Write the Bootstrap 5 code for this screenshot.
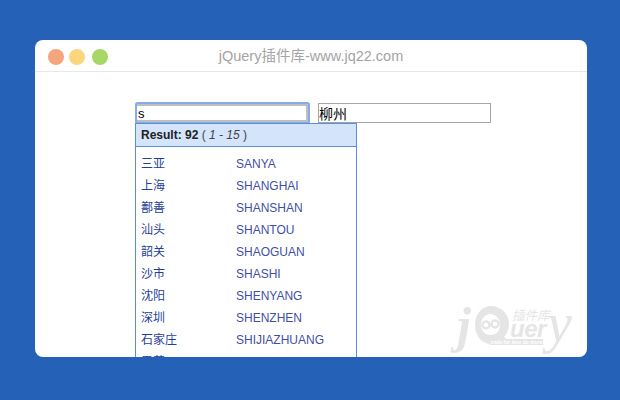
<!DOCTYPE html>
<html lang="zh">
<head>
  <meta charset="UTF-8" />
  <title>jQuery插件库</title>
  <link href="https://cdn.jsdelivr.net/npm/bootstrap@5.3.0/dist/css/bootstrap.min.css" rel="stylesheet" />
  <style>
    html, body { height: 400px; overflow: hidden; }
    body { background: #2562b7; padding: 40px 33px 43px 35px; font-family: "Liberation Sans", "Noto Sans CJK SC", sans-serif; }
    .demo-window { height: 317px; background: #fff; border-radius: 8px; overflow: hidden; position: relative; }
    .demo-bar { height: 32px; border-bottom: 1px solid #e8e8e8; padding: 2px 0 0 13px; position: relative; }
    .dot { width: 16px; height: 16px; border-radius: 50%; }
    .dot-red { background: #f5a57d; }
    .dot-yellow { background: #fad67c; margin-left: 1px; }
    .dot-green { background: #a8d767; margin-left: 3px; }
    .demo-title { position: absolute; left: 0; right: 0; top: 6px; text-align: center; color: #a4a4a4; font-size: 14.5px; line-height: 20px; }
    .demo-body { padding: 30px 0 0 100px; position: relative; }
    .ac-box { position: relative; width: 174px; }
    .ac-input { display: block; border-radius: 0; font-size: 13px; color: #000; background: #fff; font-family: inherit; outline: 0; }
    .ac-input-first { width: 171px; height: 18px; margin: 2px 0 1px 2px; border-style: solid; border-color: #bfbfbf; border-width: 2px 2px 2px 0; padding: 0 1px 0 1px; line-height: 14px; box-shadow: 0 0 0 2px #86abea; border-radius: 1px; }
    .ac-input-second { width: 173px; height: 20px; margin: 1px 0 0 9px; border: 1px solid #a6a6a6; padding: 0 0 1px; font-size: 14px; line-height: 17px; }
    .ac-menu { position: absolute; left: 0; top: 21px; width: 222px; border: 1px solid #5b8ed8; border-bottom: 0; background: #fff; }
    .ac-head { height: 23px; background: #d3e4fb; border-bottom: 1px solid #5b8ed8; padding-left: 5px; font-size: 12px; line-height: 23px; color: #444; }
    .ac-head b { color: #222; }
    .ac-list { padding: 6px 0 0 5px; margin: 0; }
    .ac-row { height: 22px; line-height: 22px; font-size: 12px; }
    .ac-cn { width: 95px; color: #1f3f99; }
    .ac-en { color: #3f4fa3; }
    /* watermark, offsets are from the window corner */
    .wm { position: absolute; left: 420px; top: 262px; width: 125px; height: 55px; color: #e5e5e5; pointer-events: none; }
    .wm-face { position: absolute; left: 19px; top: 3px; }
    .wm-j { position: absolute; left: 2px; top: -2px; font: italic bold 50px/50px "Liberation Serif", serif; }
    .wm-uer { position: absolute; left: 55px; top: 12px; font: italic bold 24px/30px "Liberation Sans", sans-serif; letter-spacing: -.5px; }
    .wm-y { position: absolute; left: 92px; top: -4px; font: italic 56px/50px "Liberation Serif", serif; }
    .wm-cn { position: absolute; left: 57px; top: 5px; font: italic 12.5px/16px "Noto Sans CJK SC", sans-serif; }
    .wm-sub { position: absolute; left: 35px; top: 37px; width: 53px; height: 6px; overflow: hidden; text-align: center; font: italic bold 5px/6px "Liberation Sans", sans-serif; white-space: nowrap; background: #e5e5e5; color: #fff; }
  </style>
</head>
<body>
  <div class="demo-window">
    <div class="demo-bar d-flex align-items-center gap-1">
      <span class="dot dot-red"></span>
      <span class="dot dot-yellow"></span>
      <span class="dot dot-green"></span>
      <div class="demo-title">jQuery插件库-www.jq22.com</div>
    </div>
    <div class="demo-body d-flex align-items-start">
      <div class="ac-box">
        <input class="ac-input ac-input-first" type="text" value="s" />
        <div class="ac-menu">
          <div class="ac-head"><b>Result: 92</b> ( <i>1 - 15</i> )</div>
          <div class="ac-list" id="acList"></div>
        </div>
      </div>
      <input class="ac-input ac-input-second" type="text" value="柳州" />
    </div>
    <div class="wm">
      <span class="wm-j">j</span>
      <svg class="wm-face" width="36" height="40" viewBox="0 0 36 40">
        <!-- thick ring, heavier at the bottom, with a small tail -->
        <path fill="#e5e5e5" fill-rule="evenodd" d="M17 1C8 1 1 9 1 20s7 19 16 19c3 0 6-1 8-2l6 1 2-4-3-2c3-3 5-8 5-13C35 9 27 1 17 1zM16 9c5 0 10 4 10 11 0 6-4 10-9 10-6 0-10-4-10-10C7 14 11 9 16 9z"/>
        <circle cx="12" cy="20" r="3.500" fill="none" stroke="#e5e5e5" stroke-width="2.500"/>
        <circle cx="21" cy="19" r="3.500" fill="none" stroke="#e5e5e5" stroke-width="2.500"/>
      </svg>
      <span class="wm-uer">uer</span>
      <span class="wm-y">y</span>
      <span class="wm-cn">插件库</span>
      <span class="wm-sub">code for less do more</span>
    </div>
  </div>

  <script src="https://cdn.jsdelivr.net/npm/bootstrap@5.3.0/dist/js/bootstrap.bundle.min.js"></script>
  <script>
    const cities = [
      ['三亚', 'SANYA'], ['上海', 'SHANGHAI'], ['鄯善', 'SHANSHAN'], ['汕头', 'SHANTOU'],
      ['韶关', 'SHAOGUAN'], ['沙市', 'SHASHI'], ['沈阳', 'SHENYANG'], ['深圳', 'SHENZHEN'],
      ['石家庄', 'SHIJIAZHUANG'], ['思茅', 'SIMAO']
    ];
    document.getElementById('acList').innerHTML = cities.map(c =>
      `<div class="ac-row d-flex"><span class="ac-cn">${c[0]}</span><span class="ac-en">${c[1]}</span></div>`
    ).join('');
  </script>
</body>
</html>
